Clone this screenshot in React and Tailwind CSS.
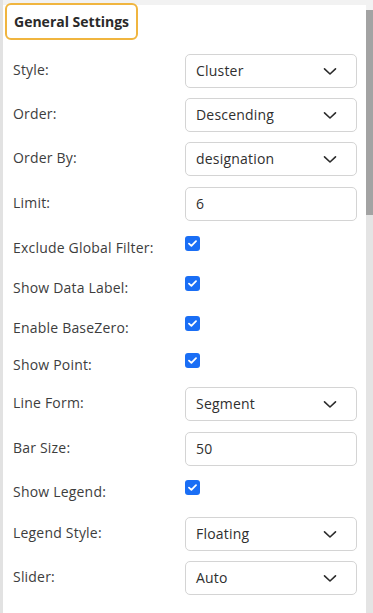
import React from 'react'

const font = { fontFamily: '"Open Sans", "Noto Sans", sans-serif' }

const Chevron = () => (
  <svg width="14" height="9" viewBox="0 0 14 9" fill="none" className="shrink-0">
    <polyline points="1.5,1.8 7,7 12.5,1.8" stroke="#2b2b2b" strokeWidth="1.6" strokeLinecap="round" strokeLinejoin="round" />
  </svg>
)

const Check = () => (
  <span className="flex h-[15px] w-[15px] items-center justify-center rounded-[3px] bg-[#1a6ef5]">
    <svg width="9" height="7" viewBox="0 0 9 7" fill="none">
      <polyline points="1,3.6 3.4,5.8 8,1.2" stroke="#fff" strokeWidth="1.8" strokeLinecap="round" strokeLinejoin="round" />
    </svg>
  </span>
)

const SelectRow = ({ label, value, className = '' }) => (
  <div className={`flex h-[34px] items-center ${className}`}>
    <span className="w-[172px] pb-[3px] text-[14px] tracking-[0.2px] text-[#3d3d3d]">{label}</span>
    <div className="flex h-[34px] w-[172px] items-center justify-between rounded-[5px] border border-[#d4d4d4] bg-white pl-[10px] pr-[19px] text-[14px] tracking-[0.2px] text-[#2f2f2f]">
      <span className="pb-[2px]">{value}</span>
      <Chevron />
    </div>
  </div>
)

const InputRow = ({ label, value, className = '' }) => (
  <div className={`flex h-[34px] items-center ${className}`}>
    <span className="w-[172px] pb-[3px] text-[14px] tracking-[0.2px] text-[#3d3d3d]">{label}</span>
    <div className="flex h-[34px] w-[172px] items-center rounded-[5px] border border-[#d4d4d4] bg-white pb-[2px] pl-[10px] text-[14px] tracking-[0.2px] text-[#2f2f2f]">
      {value}
    </div>
  </div>
)

const CheckRow = ({ label, className = '' }) => (
  <div className={`flex items-start ${className}`}>
    <span className="mt-[3px] w-[172px] text-[14px] leading-[18px] tracking-[0.2px] text-[#3d3d3d]">{label}</span>
    <Check />
  </div>
)

export default function App() {
  return (
    <div className="flex h-[613px] w-[373px] overflow-hidden bg-white" style={font}>
      <div className="flex flex-1 flex-col border-l-[3px] border-[#e2e2e2]">
        <div className="h-[5px] bg-[#f2f2f2]" />
        <div className="-mt-[2px] pl-[2px]">
          <div className="inline-flex h-[37px] items-center rounded-[6px] border-2 border-[#f0b53f] bg-white px-[7px] text-[14px] font-bold text-[#2a2a2a]">
            General Settings
          </div>
        </div>
        <div className="flex flex-col pl-[10px]">
          <SelectRow label="Style:" value="Cluster" className="mt-[14px]" />
          <SelectRow label="Order:" value="Descending" className="mt-[10px]" />
          <SelectRow label="Order By:" value="designation" className="mt-[10px]" />
          <InputRow label="Limit:" value="6" className="mt-[11px]" />
          <CheckRow label="Exclude Global Filter:" className="mt-[15px] h-[40px]" />
          <CheckRow label="Show Data Label:" className="h-[40px]" />
          <CheckRow label="Enable BaseZero:" className="h-[37px]" />
          <CheckRow label="Show Point:" className="h-[34px]" />
          <SelectRow label="Line Form:" value="Segment" />
          <InputRow label="Bar Size:" value="50" className="mt-[11px]" />
          <CheckRow label="Show Legend:" className="mt-[14px] h-[37px]" />
          <SelectRow label="Legend Style:" value="Floating" />
          <SelectRow label="Slider:" value="Auto" className="mt-[10px]" />
        </div>
      </div>
      <div className="flex w-[7px] flex-col bg-[#e4e4e4]">
        <div className="h-[10px] bg-[#f2f2f2]" />
        <div className="h-[205px] bg-[#a3a3a3]" />
      </div>
    </div>
  )
}
